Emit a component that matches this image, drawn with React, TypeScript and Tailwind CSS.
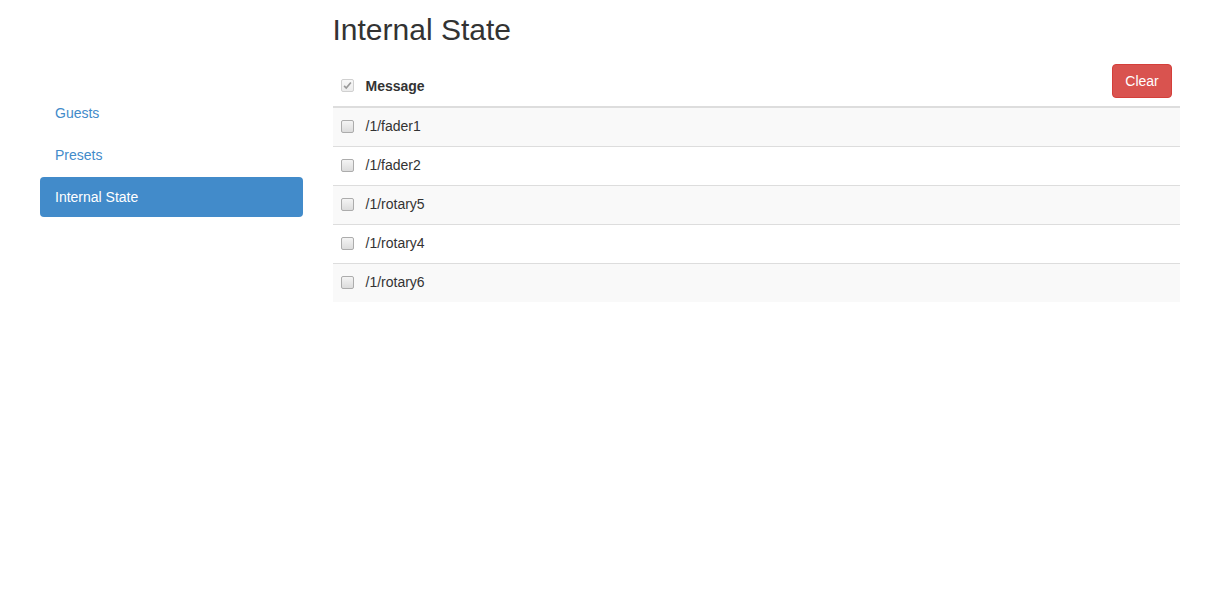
import { Fragment } from 'react';

const navItems = ['Guests', 'Presets', 'Internal State'];
const messages = ['/1/fader1', '/1/fader2', '/1/rotary5', '/1/rotary4', '/1/rotary6'];

function Box({ checked = false }: { checked?: boolean }) {
  return (
    <span
      className={[
        'flex h-[13px] w-[13px] items-center justify-center rounded-[2px] border',
        checked
          ? 'border-[#d0d0d0] bg-gradient-to-b from-[#f8f8f8] to-[#ececec]'
          : 'border-[#acacac] bg-gradient-to-b from-[#f4f4f4] to-[#dcdcdc]',
      ].join(' ')}
    >
      {checked && (
        <svg viewBox="0 0 13 13" className="h-[11px] w-[11px]">
          <path d="M2.5 7 L5 9.5 L10.5 3" fill="none" stroke="#9a9a9a" strokeWidth="2" />
        </svg>
      )}
    </span>
  );
}

export default function App() {
  return (
    <div className="min-h-[600px] bg-white font-['Liberation_Sans',Arial,sans-serif] text-[14px] leading-5 text-[#333]">
      <div className="mx-auto flex w-[1170px] px-[15px]">
        {/* sidebar */}
        <ul className="mt-[93px] flex w-[262.5px] shrink-0 flex-col gap-[2px]">
          {navItems.map((item) => {
            const active = item === 'Internal State';
            return (
              <li key={item}>
                <a
                  href="#"
                  className={[
                    'block rounded-[4px] px-[15px] py-[10px]',
                    active ? 'bg-[#428bca] text-white' : 'text-[#428bca]',
                  ].join(' ')}
                >
                  {item}
                </a>
              </li>
            );
          })}
        </ul>

        {/* main */}
        <div className="ml-[30px] flex-1">
          <h2 className="mt-[13px] text-[30px] leading-[33px] font-normal text-[#333]">Internal State</h2>

          <div className="mt-[11px]">
            <div className="flex h-[51px] items-end border-b-2 border-[#ddd] pb-[10px]">
              <span className="pl-[8px] pb-[4px]">
                <Box checked />
              </span>
              <span className="ml-[12px] font-bold">Message</span>
              <button
                type="button"
                className="mt-[7px] ml-auto mr-[8px] h-[34px] w-[60px] self-start rounded-[4px] border border-[#d43f3a] bg-[#d9534f] text-white"
              >
                Clear
              </button>
            </div>
            {messages.map((msg, i) => (
              <Fragment key={msg}>
                {i > 0 && <div className="h-px bg-[#ddd]" />}
                <div
                  className={[
                    'flex h-[38px] items-center pb-[2px]',
                    i % 2 === 0 ? 'bg-[#f9f9f9]' : 'bg-white',
                  ].join(' ')}
                >
                  <span className="pl-[8px]">
                    <Box />
                  </span>
                  <span className="ml-[12px]">{msg}</span>
                </div>
              </Fragment>
            ))}
          </div>
        </div>
      </div>
    </div>
  );
}
